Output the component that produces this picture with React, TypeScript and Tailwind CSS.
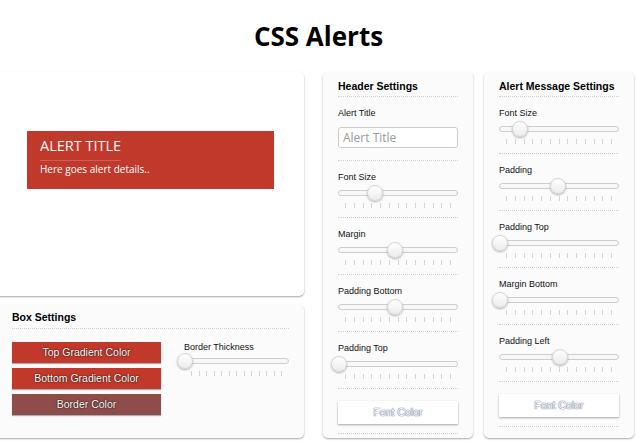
import React from "react";

const card = "bg-[#fbfbfb] rounded-[5px] shadow-[0_1px_2px_rgba(0,0,0,0.35)]";
const dotted = "border-b border-dotted border-[#cfcfcf]";

const Slider = ({ value }: { value: number }) => (
  <div>
    <div className="relative h-4 flex items-center">
      <div className="w-full h-[6px] rounded-full border border-[#cdcdcd] bg-[#f8f8f8]" />
      <div
        className="absolute top-0 w-4 h-4 rounded-full bg-gradient-to-b from-white to-[#ececec] border border-[#d6d6d6] shadow-[0_1px_2px_rgba(0,0,0,0.3)]"
        style={{ left: `calc(${value}% - 7px)` }}
      />
    </div>
    <div className="flex justify-between px-[7px] mt-[2px]">
      {Array.from({ length: 13 }).map((_, i) => (
        <span key={i} className="w-px h-[5px] bg-[#d3d3d3]" />
      ))}
    </div>
  </div>
);

const SliderSection = ({ label, value }: { label: string; value: number }) => (
  <div className={`pt-[10px] pb-[9px] ${dotted}`}>
    <div className="text-[9px] leading-[12px] text-[#111]">{label}</div>
    <div className="mt-[2px]">
      <Slider value={value} />
    </div>
  </div>
);

const FontColorButton = () => (
  <div className="mt-3 h-[23px] bg-white shadow-[0_1px_2px_rgba(0,0,0,0.35)] flex items-center justify-center text-[10.5px] text-white [text-shadow:0_0_1px_#6f7f9c,0_0_1px_#6f7f9c,0_0_1px_#6f7f9c]">
    Font Color
  </div>
);

const colorButtons = [
  { label: "Top Gradient Color", bg: "bg-[#c0392b]" },
  { label: "Bottom Gradient Color", bg: "bg-[#c0392b]" },
  { label: "Border Color", bg: "bg-[#8e4d4a]" },
];

const App = () => {
  return (
    <div className="w-[637px] h-[448px] overflow-hidden bg-white font-['Liberation_Sans',Arial,sans-serif]">
      <div className="h-[71px] flex items-center justify-center">
        <h1 className="text-[26px] font-bold text-black font-['Open_Sans',sans-serif] leading-none">
          CSS Alerts
        </h1>
      </div>

      <div className="flex mt-[1px]">
        <div className="ml-[-8px] w-[312px] flex flex-col gap-[9px]">
          <div className="h-[224px] bg-white rounded-[5px] shadow-[0_1px_2px_rgba(0,0,0,0.35)] pt-[59px] pl-[35px]">
            <div className="w-[247px] h-[58px] bg-[#c0392b] pl-[13px] pt-[2px] font-['Open_Sans',sans-serif] text-white">
              <div className="inline-block text-[14.5px] leading-[20px] pb-[4px] border-b border-[rgba(255,255,255,0.2)]">
                ALERT TITLE
              </div>
              <div className="text-[10px] leading-[14px] mt-[1px]">Here goes alert details..</div>
            </div>
          </div>

          <div className={`h-[133px] ${card} pl-[20px] pr-[15px]`}>
            <div className={`pt-[5px] pb-[4px] text-[10.5px] leading-[14px] font-bold text-black ${dotted}`}>
              Box Settings
            </div>
            <div className="flex mt-[13px]">
              <div className="w-[149px] flex flex-col gap-[5px]">
                {colorButtons.map((b) => (
                  <div
                    key={b.label}
                    className={`h-[21px] ${b.bg} shadow-[0_1px_1px_rgba(0,0,0,0.3)] flex items-center justify-center text-[10.5px] text-white [text-shadow:0_0_1px_rgba(0,0,0,0.9),0_0_2px_rgba(0,0,0,0.6)]`}
                  >
                    {b.label}
                  </div>
                ))}
              </div>
              <div className="flex-1 ml-[23px]">
                <div className="text-[9px] leading-[10px] text-[#111]">Border Thickness</div>
                <div className="mt-[1px]">
                  <Slider value={0} />
                </div>
              </div>
            </div>
          </div>
        </div>

        <div className={`ml-[19px] w-[150px] h-[366px] ${card} px-[15px]`}>
          <div className={`pt-[7px] pb-[3px] text-[10.5px] leading-[14px] font-bold text-black ${dotted}`}>
            Header Settings
          </div>
          <div className={`pt-[10px] pb-[11px] ${dotted}`}>
            <div className="text-[9px] leading-[12px] text-[#111]">Alert Title</div>
            <input
              placeholder="Alert Title"
              className="mt-[8px] w-full h-[21px] border border-[#cccccc] rounded-[3px] bg-white px-[4px] text-[12px] font-['Open_Sans',sans-serif] placeholder:text-[#999] outline-none"
            />
          </div>
          <SliderSection label="Font Size" value={30} />
          <SliderSection label="Margin" value={47} />
          <SliderSection label="Padding Bottom" value={47} />
          <SliderSection label="Padding Top" value={0} />
          <div className={`pb-[9px] ${dotted}`}>
            <FontColorButton />
          </div>
        </div>

        <div className={`ml-[11px] w-[150px] h-[366px] ${card} px-[15px]`}>
          <div className={`pt-[7px] pb-[3px] text-[10.5px] leading-[14px] font-bold text-black whitespace-nowrap ${dotted}`}>
            Alert Message Settings
          </div>
          <SliderSection label="Font Size" value={17} />
          <SliderSection label="Padding" value={48} />
          <SliderSection label="Padding Top" value={0} />
          <SliderSection label="Margin Bottom" value={0} />
          <SliderSection label="Padding Left" value={50} />
          <div className={`pb-[9px] ${dotted}`}>
            <FontColorButton />
          </div>
        </div>
      </div>
    </div>
  );
};

export default App;
